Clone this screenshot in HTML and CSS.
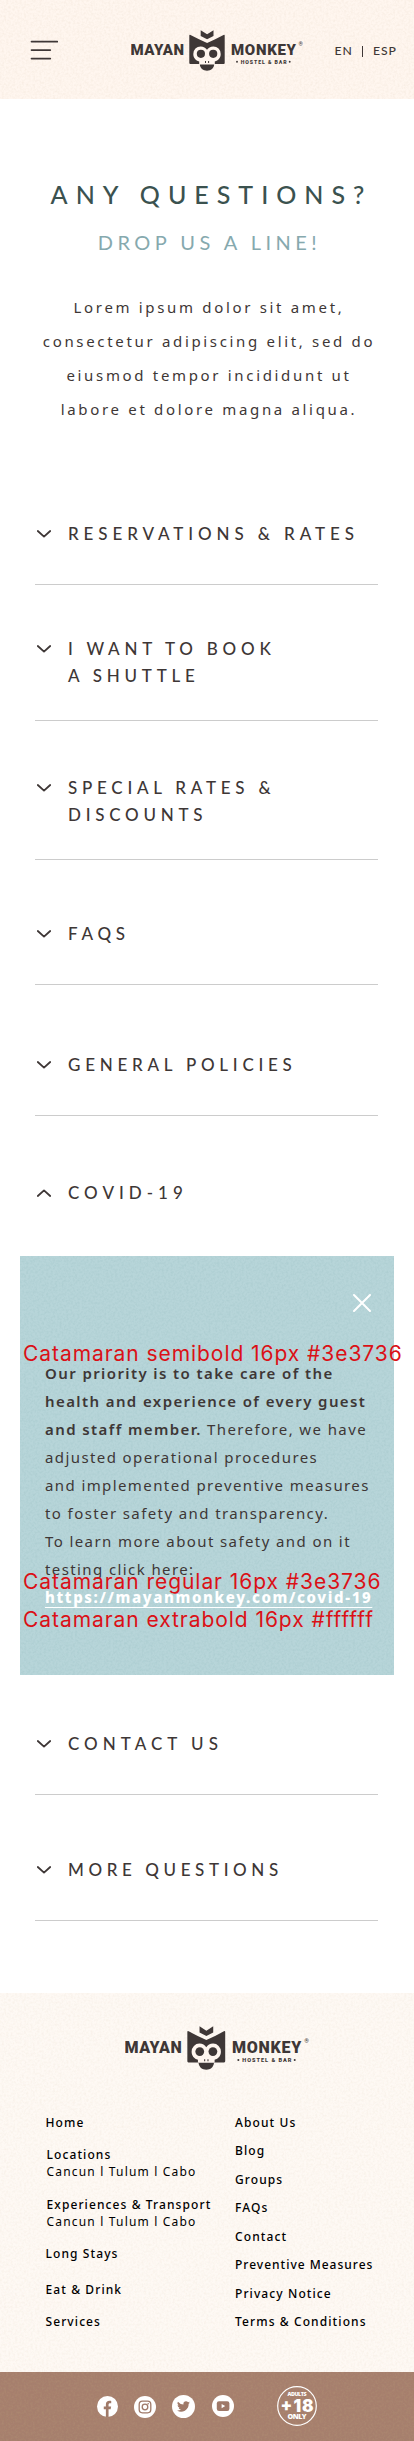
FILE: index.html
```html
<!DOCTYPE html>
<html lang="en">
<head>
<meta charset="utf-8">
<meta name="viewport" content="width=device-width, initial-scale=1">
<title>Mayan Monkey – Any questions?</title>
<link rel="stylesheet" href="styles.css">
</head>
<body>
<svg class="defs" aria-hidden="true">
  <defs>
    <filter id="grain" x="0" y="0" width="100%" height="100%">
      <feTurbulence type="fractalNoise" baseFrequency="0.45" numOctaves="2" seed="4"/>
      <feColorMatrix values="0 0 0 0 0.5  0 0 0 0 0.35  0 0 0 0 0.2  1.6 0 0 0 -0.6"/>
    </filter>
    <filter id="grain-blue" x="0" y="0" width="100%" height="100%">
      <feTurbulence type="fractalNoise" baseFrequency="0.45" numOctaves="2" seed="9"/>
      <feColorMatrix values="0 0 0 0 0.3  0 0 0 0 0.5  0 0 0 0 0.52  2.4 0 0 0 -0.9"/>
    </filter>
    <symbol id="chevron" viewBox="0 0 14 8"><path d="M.8 1 7 6.6 13.2 1" fill="none" stroke="#3e3736" stroke-width="1.8" stroke-linecap="round" stroke-linejoin="round"/></symbol>
    <symbol id="logo" viewBox="131 30 173 41">
      <g fill="#3e3736">
        <path d="M200.7 30.2 207.1 34.3 213.5 30.2V36L207.1 39.2 200.7 36Z"/>
        <path d="M189.3 35.6Q189.3 34.3 190.5 34.9L199 39.2 207.1 43 215.2 39.2 223.5 34.9Q224.7 34.3 224.7 35.6V63Q224.7 64 223.7 64H190.3Q189.3 64 189.3 63Z"/>
        <path d="M199.8 64.6H214.2C213.7 68.5 211 70.8 207 70.8S200.3 68.5 199.8 64.6Z"/>
      </g>
      <path d="M200.7 46.4C203.5 46.4 205.7 47.8 207 49.8 208.3 47.8 210.5 46.4 213.3 46.4A7.3 7.5 0 0 1 220.7 54C220.7 57.8 218.3 60.6 214.8 61.4V64H199.2V61.4C195.7 60.6 193.3 57.8 193.3 54A7.3 7.5 0 0 1 200.7 46.4Z" fill="#fff6ef"/>
      <g fill="#3e3736">
        <circle cx="200.9" cy="53.8" r="4.1"/>
        <circle cx="213.2" cy="53.8" r="4.1"/>
        <path d="M205 61h1v1.9h-1zM208.1 61h1v1.9h-1z"/>
        <circle cx="237" cy="61.8" r=".95"/>
        <circle cx="289.7" cy="61.8" r=".95"/>
        <text class="logo-name" x="130.5" y="55" textLength="53.5">MAYAN</text>
        <text class="logo-name" x="231" y="55" textLength="65">MONKEY</text>
        <text class="logo-sub" x="240.7" y="63.8" textLength="46">HOSTEL &amp; BAR</text>
        <text class="logo-reg" x="298.6" y="45.6">®</text>
      </g>
    </symbol>
  </defs>
</svg>

<header class="top textured">
  <svg class="grain"><rect width="100%" height="100%" filter="url(#grain)"/></svg>
  <svg class="menu" viewBox="0 0 28 20"><path d="M1.500 1.6H27.300M1.500 10.1H20.300M1.500 18.6H20.300" stroke="#3e3736" stroke-width="1.7" stroke-linecap="round"/></svg>
  <svg class="logo"><use href="#logo"/></svg>
  <nav class="lang"><span>EN</span><i></i><span>ESP</span></nav>
</header>

<main>
  <section class="intro">
    <h1>ANY QUESTIONS?</h1>
    <h2>DROP US A LINE!</h2>
    <p>Lorem ipsum dolor sit amet,<br>consectetur adipiscing elit, sed do<br>eiusmod tempor incididunt ut<br>labore et dolore magna aliqua.</p>
  </section>

  <section class="faq">
    <div class="item reservations"><svg><use href="#chevron"/></svg><h3>RESERVATIONS &amp; RATES</h3></div>
    <div class="item shuttle"><svg><use href="#chevron"/></svg><h3>I WANT TO BOOK<br>A SHUTTLE</h3></div>
    <div class="item rates"><svg><use href="#chevron"/></svg><h3>SPECIAL RATES &amp;<br>DISCOUNTS</h3></div>
    <div class="item faqs"><svg><use href="#chevron"/></svg><h3>FAQS</h3></div>
    <div class="item policies"><svg><use href="#chevron"/></svg><h3>GENERAL POLICIES</h3></div>
    <div class="item covid"><svg class="up"><use href="#chevron"/></svg><h3>COVID-19</h3></div>
    <div class="panel textured">
      <svg class="grain"><rect width="100%" height="100%" filter="url(#grain-blue)"/></svg>
      <svg class="close" viewBox="0 0 18 18"><path d="M1 1 17 17M17 1 1 17" stroke="#fff" stroke-width="2" stroke-linecap="round"/></svg>
      <p><b>Our priority is to take care of the<br>health and experience of every guest<br>and staff member.</b> Therefore, we have<br>adjusted operational procedures<br>and implemented preventive measures<br>to foster safety and transparency.<br>To learn more about safety and on it<br>testing click here:<br><a>https://mayanmonkey.com/covid-19</a></p>
      <span class="note semibold">Catamaran semibold 16px #3e3736</span>
      <span class="note regular">Catamaran regular 16px #3e3736</span>
      <span class="note extrabold">Catamaran extrabold 16px #ffffff</span>
    </div>
    <div class="item contact"><svg><use href="#chevron"/></svg><h3>CONTACT US</h3></div>
    <div class="item more"><svg><use href="#chevron"/></svg><h3>MORE QUESTIONS</h3></div>
  </section>
</main>

<footer>
  <div class="links textured">
    <svg class="grain"><rect width="100%" height="100%" filter="url(#grain)"/></svg>
    <svg class="logo"><use href="#logo"/></svg>
    <div class="columns">
      <ul class="left">
        <li>Home</li>
        <li class="group">Locations<small>Cancun l Tulum l Cabo</small></li>
        <li class="group">Experiences &amp; Transport<small>Cancun l Tulum l Cabo</small></li>
        <li>Long Stays</li>
        <li class="eat">Eat &amp; Drink</li>
        <li>Services</li>
      </ul>
      <ul class="right">
        <li>About Us</li><li>Blog</li><li>Groups</li><li>FAQs</li><li>Contact</li><li class="tight">Preventive Measures</li><li>Privacy Notice</li><li>Terms &amp; Conditions</li>
      </ul>
    </div>
  </div>
  <div class="social textured">
    <svg class="grain"><rect width="100%" height="100%" filter="url(#grain)"/></svg>
    <svg class="icon fb" viewBox="0 0 22 22"><circle cx="11" cy="11" r="11" fill="#fff"/><path d="M9.3 22V13.8H7.1V11H9.3V8.9C9.3 6.3 10.8 5 13 5 14 5 14.9 5.2 14.9 5.2V7.6H13.7C12.5 7.6 12.1 8.3 12.1 9.1V11H14.8L14.3 13.8H12.1V22Z" fill="#9f7968"/></svg>
    <svg class="icon ig" viewBox="0 0 22 22"><circle cx="11" cy="11" r="11" fill="#fff"/><g fill="none" stroke="#9f7968" stroke-width="1.3"><rect x="5.2" y="5.2" width="11.6" height="11.6" rx="3.2"/><circle cx="11" cy="11" r="2.8"/></g><circle cx="14.2" cy="7.8" r=".8" fill="#9f7968"/></svg>
    <svg class="icon tw" viewBox="0 0 23 23"><circle cx="11.5" cy="11.5" r="11.5" fill="#fff"/><path transform="translate(5.2 5) scale(.54)" d="M23.6 4.6a9 9 0 0 1-2.8.8 4.9 4.9 0 0 0 2.2-2.7 10 10 0 0 1-3.1 1.2 4.9 4.9 0 0 0-8.4 4.5A14 14 0 0 1 1.4 3.2a4.9 4.9 0 0 0 1.5 6.6 5 5 0 0 1-2.2-.6 4.9 4.9 0 0 0 3.9 4.9 5 5 0 0 1-2.2.1 4.9 4.9 0 0 0 4.6 3.4A9.9 9.9 0 0 1-.3 19.5a14 14 0 0 0 21.5-12.4 10 10 0 0 0 2.4-2.5Z" fill="#9f7968"/></svg>
    <svg class="icon yt" viewBox="0 0 22 22"><circle cx="11" cy="11" r="11" fill="#fff"/><rect x="4.8" y="6.3" width="12.6" height="9.6" rx="2.2" fill="#9f7968"/><path d="M9.6 9 13.2 11.1 9.6 13.2Z" fill="#fff"/></svg>
    <svg class="adults" viewBox="0 0 40 40"><circle cx="20" cy="20" r="19.3" fill="none" stroke="#fff" stroke-width="1.2"/><g fill="#fff"><text class="a1" x="10.5" y="10.2" textLength="19">ADULTS</text><text class="a2" x="3.6" y="25.5" textLength="33">+18</text><text class="a3" x="10.6" y="32.7" textLength="19">ONLY</text></g></svg>
  </div>
</footer>
</body>
</html>
```
FILE: styles.css
```css
* { box-sizing: border-box; margin: 0; padding: 0; }
body { width: 414px; background: #fff; color: #3e3736; font-family: "Noto Sans", sans-serif; }
ul { list-style: none; }
svg { display: block; flex: none; }
.defs { position: absolute; width: 0; height: 0; }

/* paper texture behind coloured areas */
.textured { position: relative; isolation: isolate; }
.grain { position: absolute; inset: 0; width: 100%; height: 100%; z-index: -1; opacity: .16; }

.top { display: flex; align-items: flex-start; height: 99px; padding: 0 18px 0 30px; background: #fff6ef; }
.top .grain { opacity: .12; }
.menu { width: 28px; height: 20px; margin-top: 40px; }
.top .logo { width: 173px; height: 41px; margin: 30px 0 0 73px; }
.logo-name { font: 900 15px Roboto, sans-serif; }
.logo-sub { font: 900 5.2px Roboto, sans-serif; }
.logo-reg { font: 400 5.5px Roboto, sans-serif; }
.lang { display: flex; align-items: center; margin: 44px 0 0 30.5px; font: 500 12.2px/14px Lato, sans-serif; letter-spacing: .9px; }
.lang i { width: 1.3px; height: 11px; margin: 0 10px 0 9px; background: #3e3736; }

.intro { padding-top: 80px; text-align: center; }
.intro h1 { padding-left: 9px; font: 500 25px/30px Lato, sans-serif; letter-spacing: 8px; color: #3b524f; }
.intro h2 { margin-top: 21px; padding-left: 5px; font: 400 20px/24px Lato, sans-serif; letter-spacing: 4.48px; color: #86a9ae; }
.intro p { margin-top: 36px; padding-left: 4px; font-size: 15px; line-height: 34px; letter-spacing: 2.67px; }

.faq { padding: 94px 35px 72px; }
.item { display: flex; width: 343px; padding: 0 0 37px 2px; border-bottom: 1px solid #ccc; }
.item svg { width: 14px; height: 8px; margin: 10px 17px 0 0; }
.item svg.up { transform: scaleY(-1); }
.item h3 { font: 500 17px/27px Lato, sans-serif; letter-spacing: 4.75px; white-space: nowrap; }
.reservations h3 { letter-spacing: 4.9px; }
.more h3 { letter-spacing: 4.6px; }
.contact h3, .covid h3 { letter-spacing: 5px; }
.shuttle { padding-top: 50px; padding-bottom: 31px; }
.rates { padding-top: 53px; padding-bottom: 31px; }
.faqs { padding-top: 60px; }
.policies { padding-top: 66px; }
.covid { padding-top: 63px; padding-bottom: 50px; border-bottom: 0; }
.contact { padding-top: 55px; }
.more { padding-top: 61px; }

.panel { width: 374px; height: 419px; margin-left: -15px; padding: 38px 23px 0 25px; background: #b7d5d9; }
.panel .grain { opacity: .24; }
.close { width: 18px; height: 18px; margin-left: auto; }
.panel p { margin-top: 47px; font-size: 15px; line-height: 28px; letter-spacing: 1.4px; white-space: nowrap; }
.panel b { font-weight: 600; }
.panel a { font-weight: 800; letter-spacing: 1.63px; color: #fff; text-decoration: underline 1px; text-underline-offset: 4px; text-decoration-skip-ink: none; }
/* type annotations laid over the copy */
.note { position: absolute; left: 3px; font: 400 21px/26px Inter, sans-serif; letter-spacing: .94px; white-space: nowrap; color: #db1016; }
.semibold { top: 85px; }
.regular { top: 313px; }
.extrabold { top: 351px; }

.links { height: 379px; padding-top: 33px; background: #fef9f4; color: #000; }
.links .grain { opacity: .1; }
.links .logo { width: 185px; height: 44px; margin-left: 125px; }
.columns { display: flex; margin-top: 44px; font-weight: 500; font-size: 12px; line-height: 17px; letter-spacing: 1.1px; }
.left { width: 235px; padding-left: 45.5px; }
.left li { margin-bottom: 15px; }
.left .group { padding-left: 1px; }
.left .group + .group { margin-top: 16px; }
.left .eat { margin-top: 19px; }
.left small { display: block; font-size: 12px; font-weight: 400; letter-spacing: 1.18px; }
.right { display: flex; flex-direction: column; justify-content: space-between; height: 216px; }
.right .tight { letter-spacing: 1px; }

.social { display: flex; height: 69px; padding-left: 97px; background: #a67f6d; }
.social .grain { opacity: .3; }
.fb { width: 21px; height: 21px; margin-top: 24px; }
.ig { width: 22px; height: 22px; margin: 24px 0 0 16px; }
.tw { width: 23px; height: 23px; margin: 23px 0 0 16px; }
.yt { width: 22px; height: 22px; margin: 23px 0 0 17px; }
.adults { width: 40px; height: 40px; margin: 14px 0 0 43px; }
.a1 { font: 800 5.4px "Open Sans", sans-serif; }
.a2 { font: 900 17px Inter, sans-serif; }
.a3 { font: 800 7.2px "Open Sans", sans-serif; }
```
